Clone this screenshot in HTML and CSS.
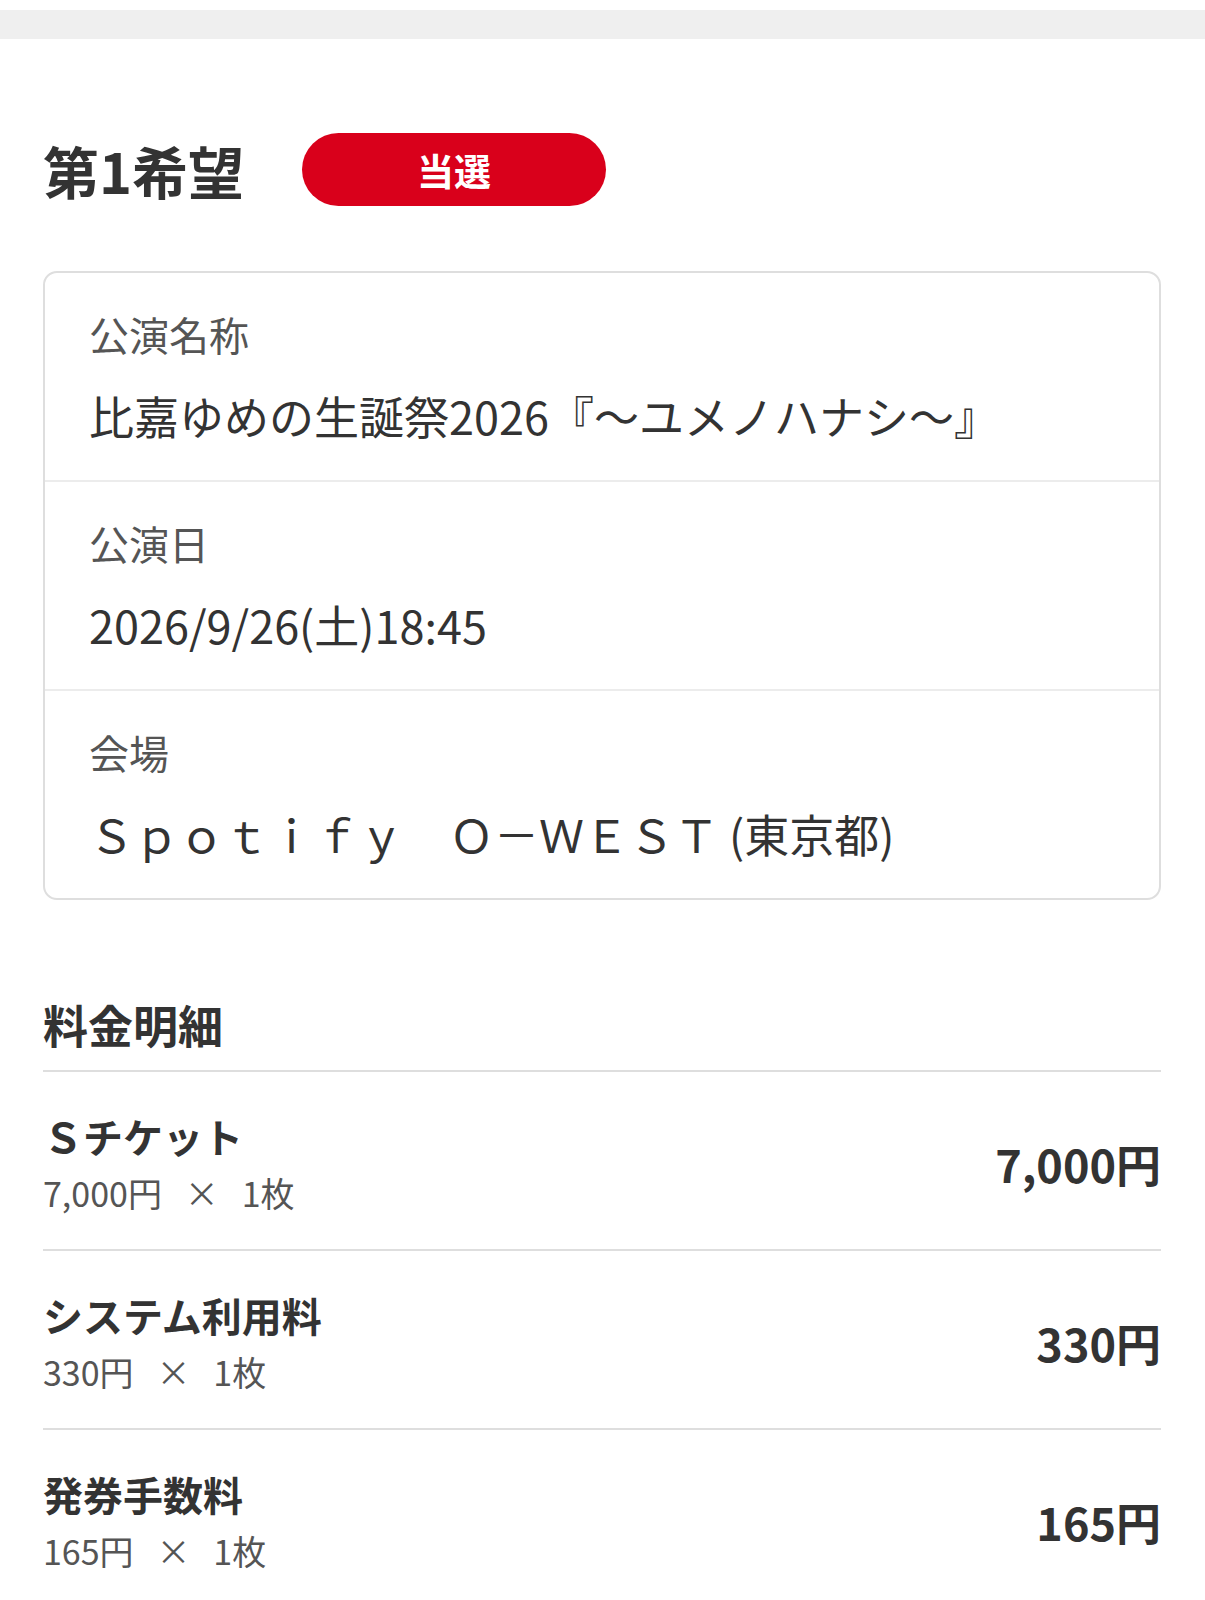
FILE: index.html
```html
<!DOCTYPE html>
<html lang="ja">
  <head>
    <meta charset="UTF-8" />
    <meta name="viewport" content="width=device-width, initial-scale=1.0" />
    <title>申込内容</title>
    <link rel="stylesheet" href="styles.css">
  </head>
  <body>
    <div class="topbar"></div>
    <div class="wrap">
      <div class="choice">
        <h2>第1希望</h2>
        <span class="badge">当選</span>
      </div>

      <div class="card">
        <div class="item">
          <div class="label">公演名称</div>
          <div class="value">比嘉ゆめの生誕祭2026『～ユメノハナシ～』</div>
        </div>
        <div class="item">
          <div class="label">公演日</div>
          <div class="value">2026/9/26(土)18:45</div>
        </div>
        <div class="item">
          <div class="label">会場</div>
          <div class="value">Ｓｐｏｔｉｆｙ　Ｏ－ＷＥＳＴ (東京都)</div>
        </div>
      </div>

      <h3 class="fee-title">料金明細</h3>
      <div class="fees">
        <div class="row">
          <div>
            <div class="name">Ｓチケット</div>
            <div class="sub">7,000円 &nbsp;&nbsp;× &nbsp;&nbsp;1枚</div>
          </div>
          <div class="price">7,000円</div>
        </div>
        <div class="row">
          <div>
            <div class="name">システム利用料</div>
            <div class="sub">330円 &nbsp;&nbsp;× &nbsp;&nbsp;1枚</div>
          </div>
          <div class="price">330円</div>
        </div>
        <div class="row">
          <div>
            <div class="name">発券手数料</div>
            <div class="sub">165円 &nbsp;&nbsp;× &nbsp;&nbsp;1枚</div>
          </div>
          <div class="price">165円</div>
        </div>
      </div>
    </div>
  </body>
</html>
```

FILE: styles.css
```css
* {
  margin: 0;
  padding: 0;
  box-sizing: border-box;
  font-family: "Noto Sans CJK JP", "Noto Sans", sans-serif;
}
body {
  background: #fff;
  color: #333;
}
.topbar {
  margin-top: 10px;
  height: 29px;
  background: #efefef;
}
.wrap {
  padding: 0 44px 0 43px;
}
.choice {
  display: flex;
  align-items: center;
  margin-top: 94px;
  height: 73px;
}
.choice h2 {
  font-size: 56px;
  font-weight: 700;
  line-height: 1;
  color: #333;
  width: 259px;
}
.badge {
  width: 304px;
  height: 73px;
  border-radius: 37px;
  background: #d9001b;
  color: #fff;
  font-size: 37px;
  font-weight: 700;
  display: flex;
  justify-content: center;
  align-items: center;
}
.card {
  margin-top: 65px;
  border: 2px solid #dedede;
  border-radius: 14px;
}
.item {
  padding: 33px 44px 31px;
  border-top: 2px solid #ececec;
}
.item:first-child {
  border-top: none;
}
.label {
  font-size: 40px;
  line-height: 56px;
  color: #555;
}
.value {
  font-size: 45px;
  line-height: 66px;
  margin-top: 21px;
  color: #333;
}
.fee-title {
  margin-top: 91px;
  font-size: 45px;
  font-weight: 700;
  line-height: 67px;
  padding-bottom: 12px;
  color: #333;
}
.row {
  display: flex;
  justify-content: space-between;
  align-items: center;
  border-top: 2px solid #dedede;
  padding: 34px 0 30px;
}
.name {
  font-size: 40px;
  font-weight: 700;
  line-height: 60px;
}
.sub {
  font-size: 34px;
  line-height: 52px;
  margin-top: 1px;
  color: #555;
}
.price {
  font-size: 45px;
  font-weight: 700;
  margin-top: 2px;
}
```
